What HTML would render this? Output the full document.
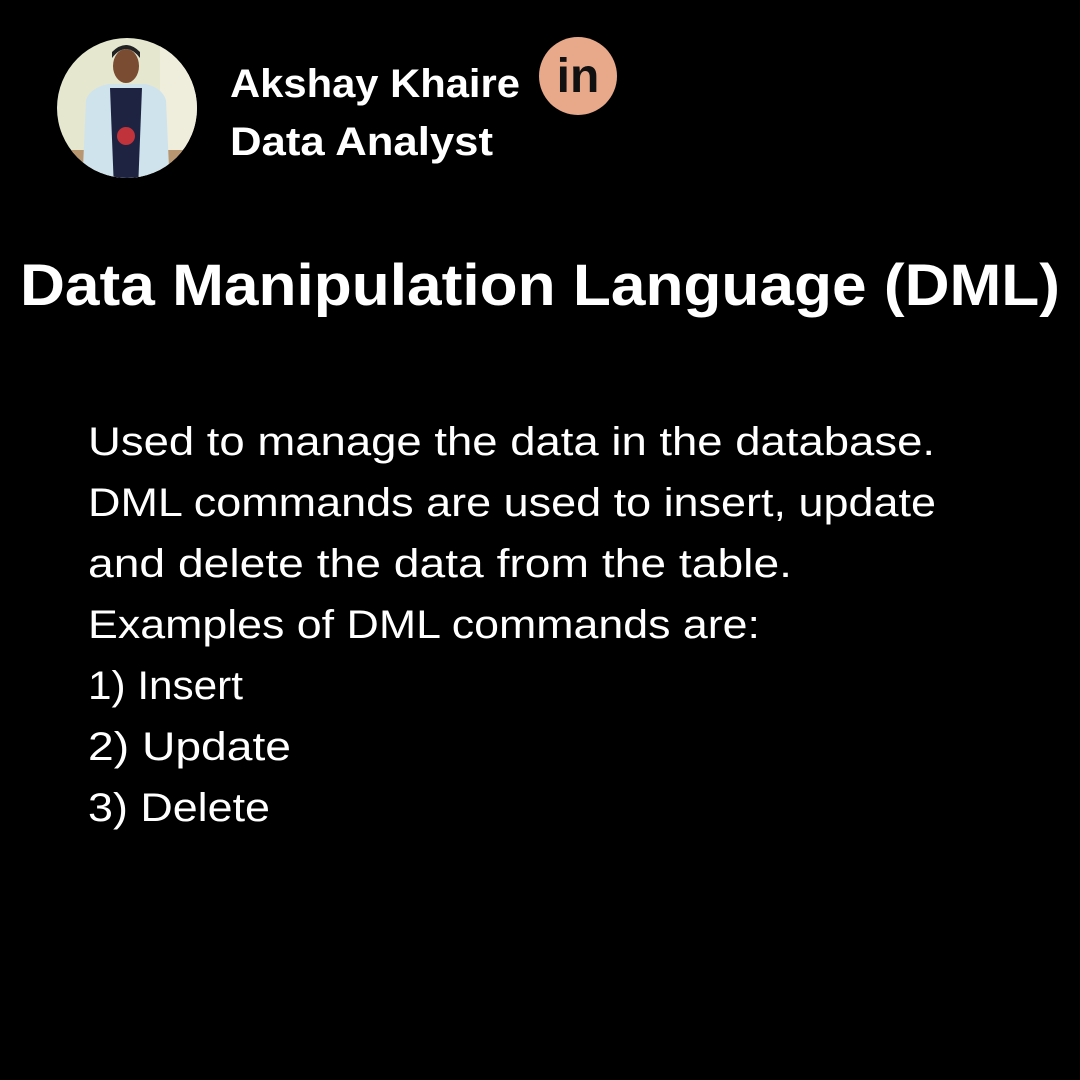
<!DOCTYPE html>
<html><head><meta charset="utf-8"><style>html,body{margin:0;padding:0;background:#000;}svg{display:block}</style></head>
<body>
<svg width="1080" height="1080" viewBox="0 0 1080 1080" xmlns="http://www.w3.org/2000/svg">
<rect width="1080" height="1080" fill="#000"/>
<defs><clipPath id="c"><circle cx="127" cy="108" r="70"/></clipPath></defs>
<g clip-path="url(#c)">
<rect x="50" y="30" width="160" height="160" fill="#e6e7cf"/>
<rect x="50" y="150" width="160" height="40" fill="#b89670"/>
<rect x="160" y="40" width="40" height="110" fill="#efeedd"/>
<path d="M82 190 L86 100 Q90 88 108 84 L146 84 Q162 88 166 100 L170 190 Z" fill="#cfe3ec"/>
<path d="M110 88 L142 88 L138 190 L114 190 Z" fill="#1d2340"/>
<circle cx="126" cy="136" r="9" fill="#c0333a"/>
<ellipse cx="126" cy="66" rx="13" ry="17" fill="#7a4c32"/>
<path d="M112 58 Q126 40 140 58 L140 52 Q126 38 112 52 Z" fill="#222"/>
</g>
<circle cx="578" cy="76" r="39" fill="#e8a98a"/>
<text x="578" y="92" text-anchor="middle" font-family="Liberation Sans, sans-serif" font-weight="bold" font-size="48" fill="#111">in</text>
<text x="230" y="97" font-family="Liberation Sans, sans-serif" font-weight="bold" font-size="40" fill="#fff" textLength="290" lengthAdjust="spacingAndGlyphs">Akshay Khaire</text>
<text x="230" y="155" font-family="Liberation Sans, sans-serif" font-weight="bold" font-size="40" fill="#fff" textLength="263" lengthAdjust="spacingAndGlyphs">Data Analyst</text>
<text x="20" y="305" font-family="Liberation Sans, sans-serif" font-weight="bold" font-size="58" fill="#fff" textLength="1040" lengthAdjust="spacingAndGlyphs">Data Manipulation Language (DML)</text>
<g font-family="Liberation Sans, sans-serif" font-size="40" fill="#fff">
<text x="88" y="455" textLength="847" lengthAdjust="spacingAndGlyphs">Used to manage the data in the database.</text>
<text x="88" y="516" textLength="848" lengthAdjust="spacingAndGlyphs">DML commands are used to insert, update</text>
<text x="88" y="577" textLength="704" lengthAdjust="spacingAndGlyphs">and delete the data from the table.</text>
<text x="88" y="638" textLength="672" lengthAdjust="spacingAndGlyphs">Examples of DML commands are:</text>
<text x="88" y="699" textLength="155" lengthAdjust="spacingAndGlyphs">1) Insert</text>
<text x="88" y="760" textLength="203" lengthAdjust="spacingAndGlyphs">2) Update</text>
<text x="88" y="821" textLength="182" lengthAdjust="spacingAndGlyphs">3) Delete</text>
</g>
</svg>
</body></html>
